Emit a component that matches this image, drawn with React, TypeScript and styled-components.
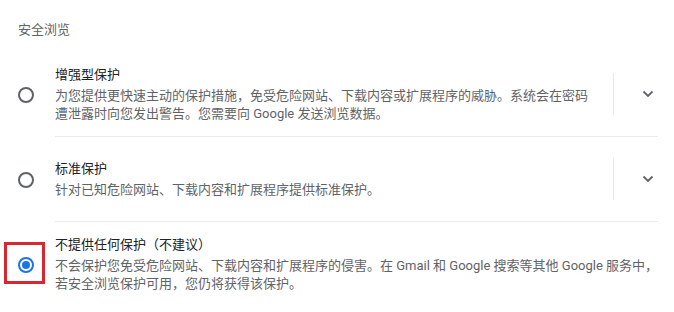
import React from "react";
import styled, { createGlobalStyle } from "styled-components";

const GlobalStyle = createGlobalStyle`
  html, body {
    margin: 0;
    padding: 0;
    background: #ffffff;
  }
  body {
    font-family: Roboto, "Noto Sans CJK SC", "Liberation Sans", sans-serif;
    font-size: 13px;
    color: #202124;
  }
`;

interface OptionState {
  id: string;
  title: string;
  lines: string[];
  expandable: boolean;
  checked: boolean;
  marked?: boolean;
}

const options: OptionState[] = [
  {
    id: "enhanced",
    title: "增强型保护",
    lines: [
      "为您提供更快速主动的保护措施，免受危险网站、下载内容或扩展程序的威胁。系统会在密码",
      "遭泄露时向您发出警告。您需要向 Google 发送浏览数据。",
    ],
    expandable: true,
    checked: false,
  },
  {
    id: "standard",
    title: "标准保护",
    lines: ["针对已知危险网站、下载内容和扩展程序提供标准保护。"],
    expandable: true,
    checked: false,
  },
  {
    id: "none",
    title: "不提供任何保护（不建议）",
    lines: [
      "不会保护您免受危险网站、下载内容和扩展程序的侵害。在 Gmail 和 Google 搜索等其他 Google 服务中，",
      "若安全浏览保护可用，您仍将获得该保护。",
    ],
    expandable: false,
    checked: true,
    marked: true,
  },
];

function App() {
  return (
    <Page>
      <GlobalStyle />
      <Header>安全浏览</Header>
      {options.map((opt, index) => (
        <Row key={opt.id}>
          <Radio $checked={opt.checked}>
            {opt.marked && <Marker />}
          </Radio>
          <Body $last={index === options.length - 1}>
            <TextBlock>
              <Title>{opt.title}</Title>
              <Desc>
                {opt.lines.map((line, i) => (
                  <Line key={i}>{line}</Line>
                ))}
              </Desc>
            </TextBlock>
            {opt.expandable && (
              <Expand>
                <VDivider />
                <ChevronBtn>
                  <svg width="12" height="8" viewBox="0 0 12 8">
                    <polyline
                      points="1.5,1.5 6,6 10.5,1.5"
                      fill="none"
                      stroke="#5f6368"
                      strokeWidth="1.8"
                    />
                  </svg>
                </ChevronBtn>
              </Expand>
            )}
          </Body>
        </Row>
      ))}
    </Page>
  );
}

export default App;

const Page = styled.div`
  width: 674px;
  height: 312px;
  box-sizing: border-box;
  padding: 0 16px 0 18px;
  overflow: hidden;
`;

const Header = styled.div`
  padding: 20px 0 12px;
  line-height: 20px;
  font-size: 13px;
  color: #5f6368;
`;

const Row = styled.div`
  display: flex;
  align-items: center;
`;

const Radio = styled.div<{ $checked: boolean }>`
  position: relative;
  flex: none;
  width: 16px;
  height: 16px;
  box-sizing: border-box;
  border-radius: 50%;
  border: 2px solid ${(p) => (p.$checked ? "#1a73e8" : "#5f6368")};
  margin-right: 21px;
  &::after {
    content: "";
    display: ${(p) => (p.$checked ? "block" : "none")};
    position: absolute;
    left: 2px;
    top: 2px;
    width: 8px;
    height: 8px;
    border-radius: 50%;
    background: #1a73e8;
  }
`;

const Marker = styled.div`
  position: absolute;
  left: -16px;
  top: -17px;
  width: 41px;
  height: 42px;
  box-sizing: border-box;
  border: 3px solid #d7282f;
`;

const Body = styled.div<{ $last: boolean }>`
  flex: 1;
  display: flex;
  align-items: center;
  min-height: 85px;
  box-sizing: border-box;
  padding: 2px 0 3px;
  border-bottom: ${(p) => (p.$last ? "none" : "1px solid #e8eaed")};
`;

const TextBlock = styled.div`
  flex: 1;
  min-width: 0;
`;

const Title = styled.div`
  line-height: 20px;
  font-size: 13px;
  color: #202124;
`;

const Desc = styled.div`
  margin-top: 2px;
  font-size: 13px;
  line-height: 18px;
  color: #5f6368;
`;

const Line = styled.span`
  display: block;
  white-space: nowrap;
`;

const Expand = styled.div`
  flex: none;
  display: flex;
  align-items: center;
  margin-left: 20px;
`;

const VDivider = styled.div`
  width: 1px;
  height: 42px;
  background: #e8eaed;
`;

const ChevronBtn = styled.div`
  width: 20px;
  height: 20px;
  margin-left: 24px;
  display: flex;
  align-items: center;
  justify-content: center;
`;
